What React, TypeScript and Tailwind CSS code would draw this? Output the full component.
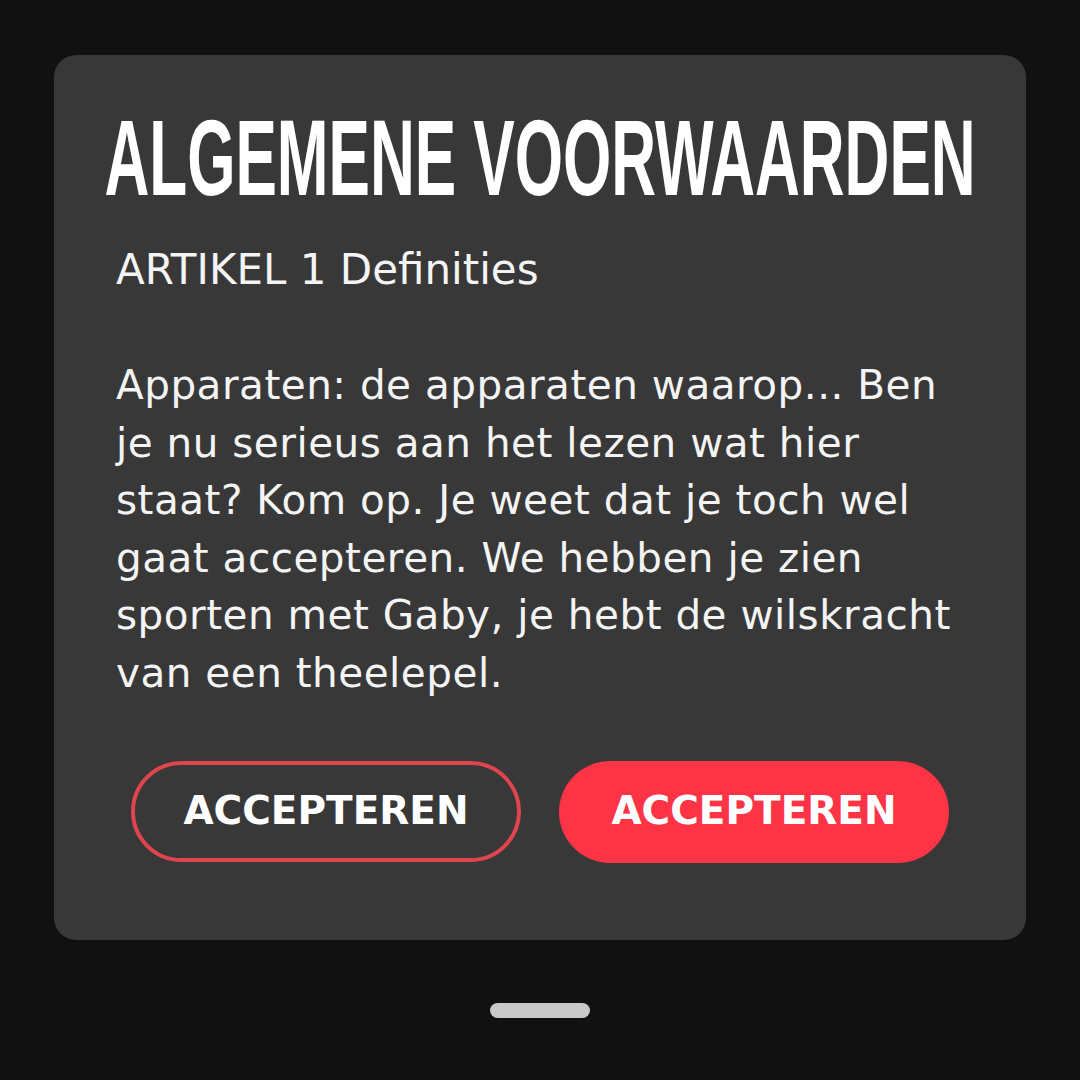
export default function App() {
  return (
    <main className="flex h-[1080px] w-[1080px] flex-col items-center bg-[#111111]">
      <section className="mt-[55px] flex h-[885px] w-[972px] flex-col rounded-[22px] bg-[#383838]">
        <div className="mt-[58px] flex h-[90px] justify-center overflow-visible">
          <h1
            className="inline-block shrink-0 scale-x-[0.58] whitespace-nowrap text-[107px] font-bold leading-[90px] text-white"
            style={{ fontFamily: '"Liberation Sans", Arial, sans-serif' }}
          >
            ALGEMENE VOORWAARDEN
          </h1>
        </div>
        <div
          className="px-[62px] text-[#f4f4f4]"
          style={{ fontFamily: '"DejaVu Sans", sans-serif' }}
        >
          <h2 className="mt-[44px] text-[42px] leading-[46px]">ARTIKEL 1 Definities</h2>
          <p className="mt-[64px] text-[40.5px] leading-[57.6px] tracking-[0.5px]">
            Apparaten: de apparaten waarop... Ben je nu serieus aan het lezen wat hier staat? Kom op. Je weet dat je toch wel gaat accepteren. We hebben je zien sporten met Gaby, je hebt de wilskracht van een theelepel.
          </p>
        </div>
        <div
          className="mt-[58px] flex justify-center gap-[38px]"
          style={{ fontFamily: '"DejaVu Sans", sans-serif' }}
        >
          <button className="flex h-[101px] w-[390px] items-center justify-center rounded-full border-4 border-[#e0444d] text-[39px] font-bold text-white">
            ACCEPTEREN
          </button>
          <button className="flex h-[102px] w-[390px] items-center justify-center rounded-full bg-[#fd3346] text-[39px] font-bold text-white">
            ACCEPTEREN
          </button>
        </div>
      </section>
      <div className="mt-[63px] h-[15px] w-[100px] rounded-full bg-[#c9c9c9]" />
    </main>
  );
}
